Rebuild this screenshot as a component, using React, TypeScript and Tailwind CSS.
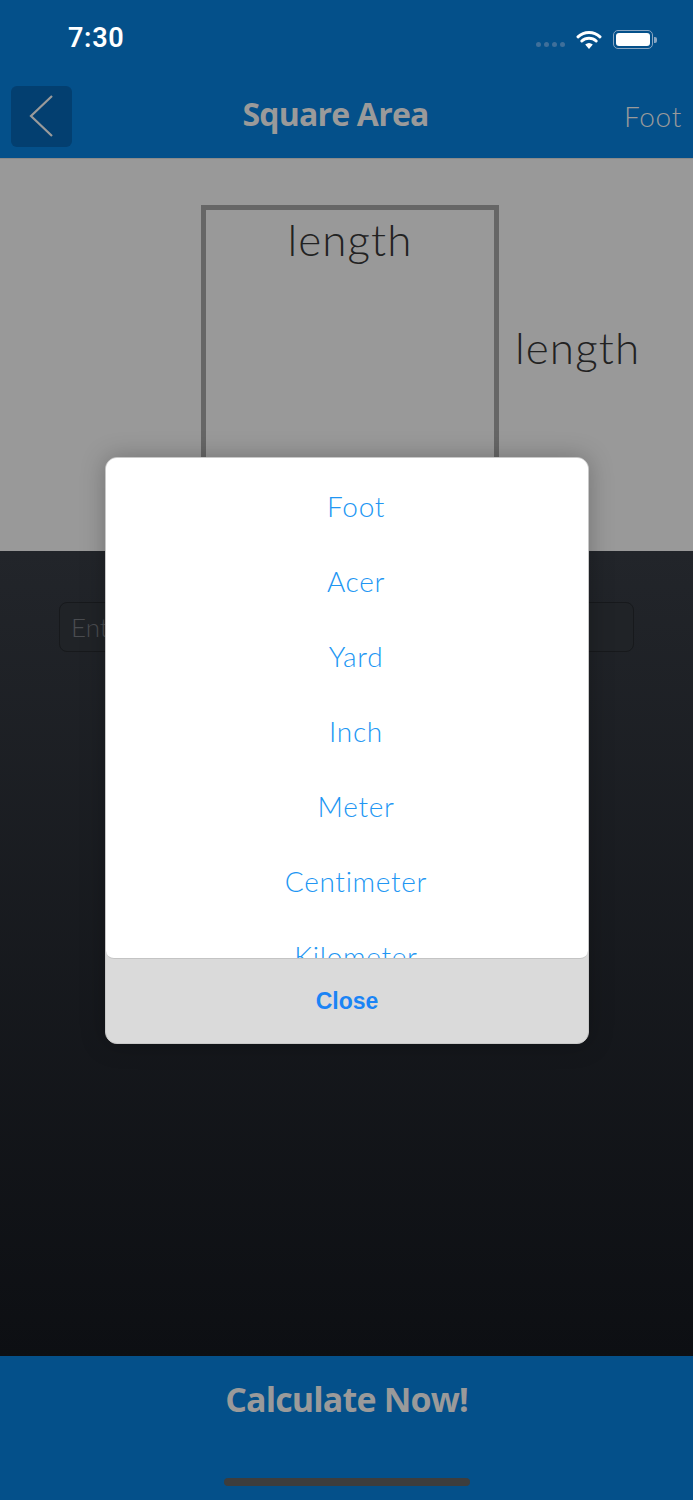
import React from 'react';

const units = ['Foot', 'Acer', 'Yard', 'Inch', 'Meter', 'Centimeter', 'Kilometer'];

const thin = { fontFamily: 'Lato, "Open Sans", sans-serif' };

export default function App() {
    return (
        <div className="relative w-[693px] h-[1500px] overflow-hidden flex flex-col bg-[#04508a]">
            {/* status bar */}
            <div className="h-[80px] shrink-0 flex items-center justify-between pl-[68px] pr-[36px] pb-[3px]">
                <span className="text-white text-[27px] font-semibold tracking-wide" style={{ fontFamily: 'Roboto, "Liberation Sans", sans-serif' }}>7:30</span>
                <div className="flex items-center gap-[11px] pt-[2px]">
                    <div className="flex items-center gap-[3px] mt-[10px]">
                        <span className="w-[5px] h-[5px] rounded-full bg-[#3f6f9a]" />
                        <span className="w-[5px] h-[5px] rounded-full bg-[#3f6f9a]" />
                        <span className="w-[5px] h-[5px] rounded-full bg-[#3f6f9a]" />
                        <span className="w-[5px] h-[5px] rounded-full bg-[#3f6f9a]" />
                    </div>
                    <svg width="26" height="20" viewBox="0 0 26 20">
                        <path d="M13 19 L9.2 14.6 A6 6 0 0 1 16.8 14.6 Z" fill="#fff" />
                        <path d="M5.8 11 A10.5 10.5 0 0 1 20.2 11" stroke="#fff" strokeWidth="3" fill="none" strokeLinecap="round" />
                        <path d="M2 6.8 A16 16 0 0 1 24 6.8" stroke="#fff" strokeWidth="3" fill="none" strokeLinecap="round" />
                    </svg>
                    <div className="flex items-center">
                        <div className="w-[40px] h-[19px] rounded-[5px] border-[1.5px] border-[#8aa6c2] p-[2px]">
                            <div className="w-full h-full rounded-[3px] bg-white" />
                        </div>
                        <div className="w-[3px] h-[6px] rounded-r-[2px] bg-[#8aa6c2] ml-[1px]" />
                    </div>
                </div>
            </div>

            {/* nav bar */}
            <div className="h-[78px] shrink-0 relative flex items-center justify-center">
                <button className="absolute left-[11px] top-[6px] w-[61px] h-[61px] rounded-[6px] bg-[#033f70] flex items-center justify-center">
                    <svg width="61" height="61" viewBox="0 0 61 61">
                        <path d="M41 10 L20 30 L41 50" stroke="#9a9a9a" strokeWidth="2.2" fill="none" />
                    </svg>
                </button>
                <h1 className="text-[32px] font-bold text-[#9a9a9a] tracking-tight mt-[-10px] mr-[22px]" style={{ fontFamily: '"Open Sans", Lato, sans-serif' }}>Square Area</h1>
                <span className="absolute right-[11px] top-[15px] text-[28px] text-[#9a9a9a] font-light tracking-wide" style={thin}>Foot</span>
            </div>

            {/* diagram */}
            <div className="h-[393px] shrink-0 bg-[#999999] border-t border-[#8a8a8a] overflow-hidden flex pl-[201px] pt-[46px] gap-[16px]">
                <div className="w-[298px] h-[340px] shrink-0 border-[5px] border-[#666666] flex justify-center">
                    <span className="text-[44px] text-[#222] font-light leading-none mt-[7px] tracking-wide" style={thin}>length</span>
                </div>
                <span className="text-[44px] text-[#222] font-light leading-none mt-[120px] tracking-wide" style={thin}>length</span>
            </div>

            {/* input area */}
            <div className="flex-1 bg-gradient-to-b from-[#22252a] to-[#0d0f13] px-[59px] pt-[51px]">
                <div className="h-[50px] w-[575px] rounded-[8px] border border-[#17191c] bg-[#202327] flex items-center px-[11px]">
                    <span className="text-[26px] text-[#4a4c50] font-light" style={thin}>Enter length</span>
                </div>
            </div>

            {/* bottom button */}
            <div className="h-[144px] shrink-0 bg-[#04508a] flex flex-col items-center">
                <span className="mt-[18px] text-[34px] font-bold text-[#9a9a9a] tracking-tight" style={{ fontFamily: '"Open Sans", Lato, sans-serif' }}>Calculate Now!</span>
                <div className="mt-auto mb-[14px] w-[246px] h-[8px] rounded-full bg-[#3d3d3d]" />
            </div>

            {/* picker modal */}
            <div className="absolute left-[105px] top-[457px] w-[484px] h-[587px] rounded-[12px] bg-[#dadada] border border-[#c8c8c8] overflow-hidden shadow-[0_0_24px_rgba(0,0,0,0.25)] flex flex-col">
                <div className="h-[501px] bg-white rounded-b-[8px] border-b border-[#c4c4c4] overflow-hidden pt-[10px] pl-[18px]">
                    {units.map((u) => (
                        <div key={u} className="h-[75px] flex items-center justify-center text-[28px] text-[#2196f3] font-light tracking-wide" style={thin}>
                            {u}
                        </div>
                    ))}
                </div>
                <div className="flex-1 flex items-center justify-center">
                    <span className="text-[23px] font-bold text-[#1a84f5]" style={{ fontFamily: '"Liberation Sans", Arial, sans-serif' }}>Close</span>
                </div>
            </div>
        </div>
    );
}
